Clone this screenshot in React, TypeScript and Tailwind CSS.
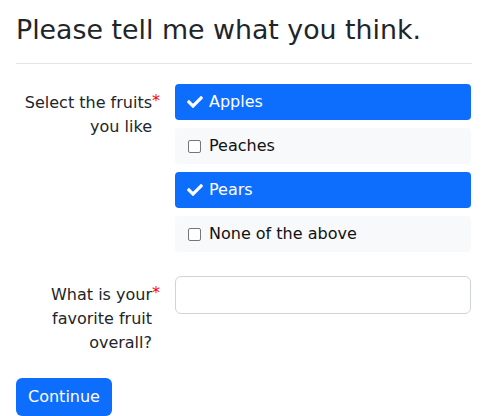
import { FaCheck } from 'react-icons/fa';

const fruits = [
  { name: 'Apples', checked: true },
  { name: 'Peaches', checked: false },
  { name: 'Pears', checked: true },
  { name: 'None of the above', checked: false },
];

function RequiredLabel({ lines }: { lines: string[] }) {
  return (
    <div className="w-[144px] shrink-0 pr-2 py-[7px] text-right text-[#212529]">
      <span className="relative inline-block">
        {lines.map((line, i) => (
          <span key={i} className="block">
            {line}
            {i === 0 && (
              <span className="absolute left-full top-[-2px] text-[#ff0000]">*</span>
            )}
          </span>
        ))}
      </span>
    </div>
  );
}

export default function App() {
  return (
    <div
      className="px-4 pt-[14px] text-[16px] leading-6 text-[#212529] bg-white"
      style={{ fontFamily: '"DejaVu Sans", sans-serif' }}
    >
      <h3 className="text-[26.8px] leading-[32px] font-normal">Please tell me what you think.</h3>
      <hr className="mt-[17px] mb-5 border-t border-[#e5e5e5] w-[456px]" />

      {/* Fruit checkboxes */}
      <div className="flex mb-4">
        <RequiredLabel lines={['Select the fruits', 'you like']} />
        <div className="ml-[15px] w-[296px]">
          {fruits.map((f) => (
            <div
              key={f.name}
              className={`flex items-center h-9 mb-2 pl-3 rounded-[4px] ${
                f.checked ? 'bg-[#0d6efd] text-white' : 'bg-[#f8f9fa] text-[#111]'
              }`}
            >
              {f.checked ? (
                <span className="w-4 flex items-center justify-start">
                  <FaCheck className="w-[16px] h-[16px] shrink-0" />
                </span>
              ) : (
                <span className="w-4 flex items-center">
                  <span className="ml-[1px] w-[13px] h-[13px] border border-[#767676] rounded-[2px] bg-white" />
                </span>
              )}
              <span className="ml-[6px]">{f.name}</span>
            </div>
          ))}
        </div>
      </div>

      {/* Favorite fruit */}
      <div className="flex mb-4">
        <RequiredLabel lines={['What is your', 'favorite fruit', 'overall?']} />
        <div className="ml-[15px] w-[296px]">
          <input
            type="text"
            className="block w-full h-[38px] px-3 border border-[#ced4da] rounded-[6px] bg-white outline-none"
          />
        </div>
      </div>

      <button className="h-[38px] px-3 rounded-[6px] bg-[#0d6efd] text-white">Continue</button>
    </div>
  );
}
